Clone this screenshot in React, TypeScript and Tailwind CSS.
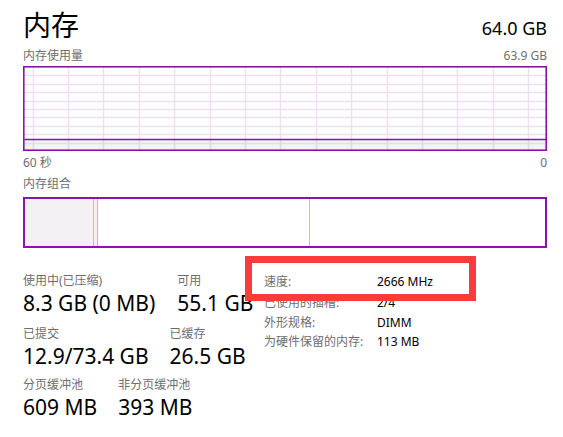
import React from "react";

const FONT = { fontFamily: '"Noto Sans", "Noto Sans CJK SC", sans-serif' };

function Graph() {
  const W = 524;
  const H = 85;
  const hs = Array.from({ length: 9 }, (_, i) => 1 + 8.4 * (i + 1));
  const vs = Array.from({ length: 15 }, (_, i) => 9.5 + 35.4 * i);
  const used = 73.5;
  return (
    <svg width={W} height={H} className="block">
      <rect x={0} y={0} width={W} height={H} fill="#ffffff" />
      <rect x={1} y={used} width={W - 2} height={H - used} fill="#f4f2f5" />
      {hs.map((y) => (
        <line key={"h" + y} x1={1} x2={W - 1} y1={Math.round(y) + 0.5} y2={Math.round(y) + 0.5} stroke={y > used ? "#e4dce8" : "#eedff3"} strokeWidth={1.5} />
      ))}
      {vs.map((x) => (
        <line key={"v" + x} x1={Math.round(x) + 0.5} x2={Math.round(x) + 0.5} y1={1} y2={H - 1} stroke="#eedff3" strokeWidth={1.5} />
      ))}
      {vs.map((x) => (
        <line key={"vg" + x} x1={Math.round(x) + 0.5} x2={Math.round(x) + 0.5} y1={used} y2={H - 1} stroke="#e2d8e6" strokeWidth={1.5} />
      ))}
      <line x1={1} x2={W - 1} y1={used} y2={used} stroke="#8b12ae" strokeWidth={1.6} />
      <rect x={0.8} y={0.8} width={W - 1.6} height={H - 1.6} fill="none" stroke="#8b12ae" strokeWidth={1.6} />
    </svg>
  );
}

function Stat({ label, value }: { label: string; value: string }) {
  return (
    <div className="flex flex-col">
      <div className="text-[12px] leading-[16px] text-[#6e6e6e] whitespace-nowrap">{label}</div>
      <div className="text-[21px] leading-[28px] text-black whitespace-nowrap">{value}</div>
    </div>
  );
}

function Detail({ label, value, h }: { label: string; value: string; h: string }) {
  return (
    <div className={"flex items-center text-[12px] " + h}>
      <div className="w-[113px] text-[#6e6e6e] whitespace-nowrap">{label}</div>
      <div className="text-black whitespace-nowrap">{value}</div>
    </div>
  );
}

export default function App() {
  return (
    <div className="w-[563px] h-[437px] bg-white relative overflow-hidden pl-[23px]" style={FONT}>
      <div className="w-[524px]">
        <div className="flex justify-between items-end h-[34px] mt-[8px]">
          <div className="text-[28px] leading-[34px] text-black">内存</div>
          <div className="text-[18px] leading-[24px] text-black mb-[2px]">64.0 GB</div>
        </div>
        <div className="flex justify-between mt-[6px] text-[12px] leading-[15px] text-[#6e6e6e]">
          <span>内存使用量</span>
          <span>63.9 GB</span>
        </div>
        <div className="mt-[3px]">
          <Graph />
        </div>
        <div className="flex justify-between mt-[4px] text-[12px] leading-[15px] text-[#6e6e6e]">
          <span>60 秒</span>
          <span>0</span>
        </div>
        <div className="mt-[6px] text-[12px] leading-[15px] text-[#6e6e6e]">内存组合</div>
        <div className="mt-[6px] h-[51px] border-2 border-[#8b12ae] flex">
          <div className="w-[68px] bg-[#f3f1f4]" />
          <div className="w-[1px] bg-[#d6aee2]" />
          <div className="w-[3px] bg-[#f5eef7]" />
          <div className="w-[1px] bg-[#d6aee2]" />
          <div className="w-[211px]" />
          <div className="w-[1px] bg-[#d6aee2]" />
          <div className="flex-1" />
        </div>
      </div>
      <div className="flex mt-[25px]">
        <div className="w-[241px] flex flex-col">
          <div className="flex gap-x-[22px]">
            <Stat label="使用中(已压缩)" value="8.3 GB (0 MB)" />
            <Stat label="可用" value="55.1 GB" />
          </div>
          <div className="flex gap-x-[21px] mt-[9px]">
            <Stat label="已提交" value="12.9/73.4 GB" />
            <Stat label="已缓存" value="26.5 GB" />
          </div>
          <div className="flex gap-x-[21px] mt-[7px]">
            <Stat label="分页缓冲池" value="609 MB" />
            <Stat label="非分页缓冲池" value="393 MB" />
          </div>
        </div>
        <div className="flex flex-col">
          <Detail label="速度:" value="2666 MHz" h="h-[18px]" />
          <Detail label="已使用的插槽:" value="2/4" h="h-[20px] mt-[2px]" />
          <Detail label="外形规格:" value="DIMM" h="h-[19px]" />
          <Detail label="为硬件保留的内存:" value="113 MB" h="h-[19px]" />
        </div>
      </div>
      <div className="absolute left-[245px] top-[256px] w-[231px] h-[45px] border-[7px] border-[#f83c3c]" />
    </div>
  );
}
